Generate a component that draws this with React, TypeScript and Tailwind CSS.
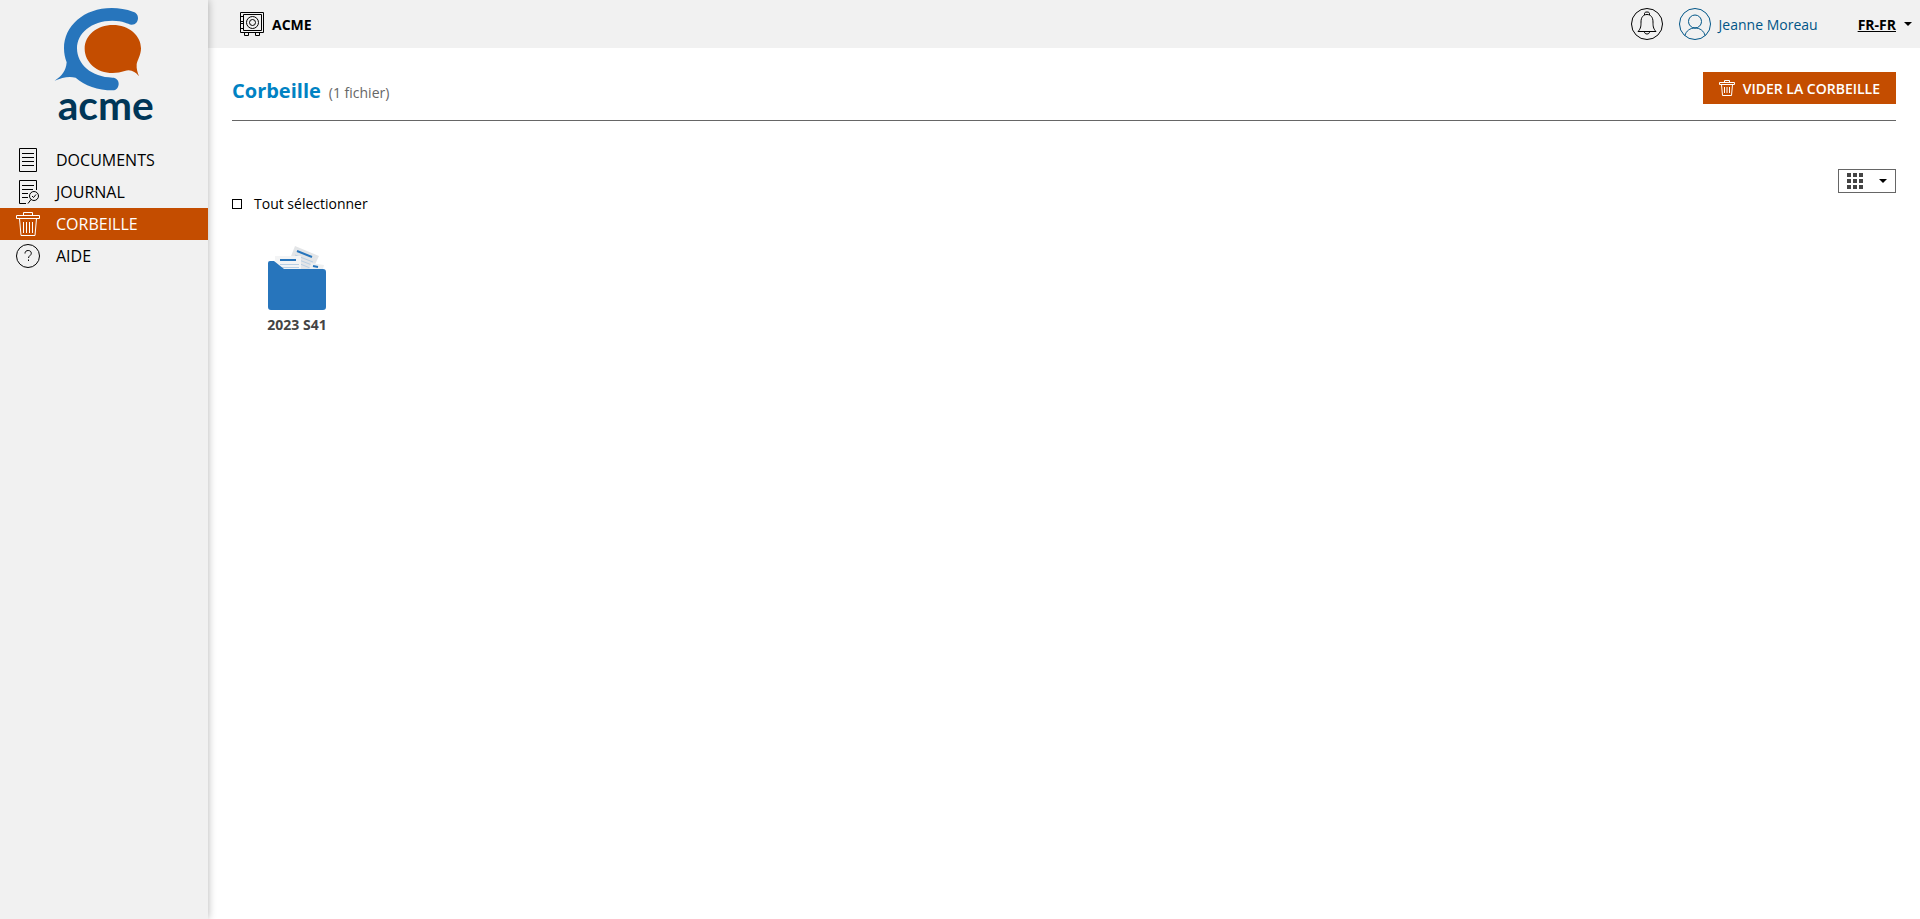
import { useState, type ReactNode } from "react";

type NavId = "documents" | "journal" | "trash" | "help";

const NAV: { id: NavId; label: string; icon: ReactNode }[] = [
  { id: "documents", label: "DOCUMENTS", icon: <DocumentIcon /> },
  { id: "journal", label: "JOURNAL", icon: <JournalIcon /> },
  { id: "trash", label: "CORBEILLE", icon: <TrashIcon /> },
  { id: "help", label: "AIDE", icon: <HelpIcon /> },
];

const FOLDERS = [{ id: "2023-s41", name: "2023 S41" }];

export default function App() {
  return (
    <div className="flex min-h-screen bg-white font-['Open_Sans',sans-serif] text-sm leading-[21px] text-black">
      <Sidebar active="trash" />
      <div className="flex min-w-0 flex-1 flex-col">
        <TopBar />
        <TrashPage />
      </div>
    </div>
  );
}

function Sidebar({ active }: { active: NavId }) {
  return (
    <aside className="z-10 w-52 shrink-0 bg-[#f1f1f1] shadow-[0_0_8px_rgba(0,0,0,0.3)]">
      <a href="#" aria-label="acme" className="flex h-36 flex-col items-center pt-2">
        <Logo />
      </a>
      <nav>
        {NAV.map((item) => (
          <a
            key={item.id}
            href={`#${item.id}`}
            aria-current={item.id === active ? "page" : undefined}
            className={`flex h-8 items-center gap-4 px-4 text-base ${
              item.id === active ? "bg-[#c44d00] text-white" : "text-black"
            }`}
          >
            {item.icon}
            {item.label}
          </a>
        ))}
      </nav>
    </aside>
  );
}

function TopBar() {
  return (
    <header className="flex h-12 items-center bg-[#f1f1f1] pr-2 pl-8">
      <a href="#" className="flex items-center gap-2 font-bold">
        <SafeIcon />
        ACME
      </a>
      <div className="ml-auto flex items-center">
        <button type="button" aria-label="Notifications" className="mr-4">
          <BellIcon />
        </button>
        <a href="#" className="mr-10 flex items-center gap-2 text-[#005587]">
          <UserIcon />
          Jeanne Moreau
        </a>
        <button type="button" className="flex items-center gap-2 font-bold">
          <span className="underline">FR-FR</span>
          <Caret />
        </button>
      </div>
    </header>
  );
}

function TrashPage() {
  const [allSelected, setAllSelected] = useState(false);

  return (
    <main className="flex-1 p-6">
      <div className="flex items-start justify-between border-b border-[#666] pb-[14px]">
        <h1 className="flex items-baseline gap-2 pt-1 text-xl leading-[30px] font-bold text-[#0082c3]">
          Corbeille
          <span className="text-sm font-normal text-[#666]">(1 fichier)</span>
        </h1>
        <button
          type="button"
          className="flex h-8 items-center gap-2 bg-[#c44d00] px-4 font-semibold text-white"
        >
          <SmallTrashIcon />
          VIDER LA CORBEILLE
        </button>
      </div>

      <div className="mt-12 flex justify-end">
        <button
          type="button"
          aria-label="Affichage en grille"
          className="flex h-6 items-center gap-4 border border-[#666] px-2"
        >
          <GridIcon />
          <Caret />
        </button>
      </div>

      <label className="flex w-fit items-center gap-3">
        <input
          type="checkbox"
          checked={allSelected}
          onChange={(e) => setAllSelected(e.target.checked)}
          className="size-[10px] appearance-none border border-black checked:bg-black"
        />
        Tout sélectionner
      </label>

      <ul className="mt-8 flex flex-wrap gap-4">
        {FOLDERS.map((f) => (
          <li key={f.id}>
            <button type="button" className="flex w-[130px] flex-col items-center gap-1 font-bold text-[#444]">
              <FolderIcon />
              {f.name}
            </button>
          </li>
        ))}
      </ul>
    </main>
  );
}

function Logo() {
  return (
    <svg width="100" height="132" viewBox="43 24 300 396" aria-hidden>
      <path
        d="M276 74c12 0 19-9 19-20 0-10-6-17-15-19-20-7-42-11-64-11C133 24 73 78 73 145c0 15 3 29 8 42-2 25-14 41-36 55 22-9 41-14 63-9 26 24 67 38 111 38 11 0 18-9 18-20s-8-18-18-18c-64-1-107-40-107-88 0-45 43-83 106-83 33 0 45 10 58 12Z"
        fill="#2775bc"
      />
      <path
        d="M220 75c47 0 84 31 84 70 0 20-11 36-13 48-1 13 2 24 7 36-11-14-25-22-43-16-11 3-23 6-36 6-48 0-84-33-84-73s37-71 85-71Z"
        fill="#c44d00"
      />
      <text
        x="54"
        y="359"
        fontSize="122"
        fontWeight="700"
        fill="#003657"
        className="font-['Lato',sans-serif]"
      >
        acme
      </text>
    </svg>
  );
}

function DocumentIcon() {
  return (
    <svg width="24" height="24" viewBox="0 0 24 24" fill="none" stroke="currentColor" aria-hidden>
      <path d="M3.5.5h17v23h-17zM6 5.5h12M6 9.5h12M6 13.5h12M6 17.5h12" />
    </svg>
  );
}

function JournalIcon() {
  return (
    <svg width="24" height="24" viewBox="0 0 24 24" fill="none" stroke="currentColor" aria-hidden>
      <path d="M10 23.5H3.5V.5h17V10M6 5.5h12M6 9.5h11M6 13.5h6M6 17.5h6" />
      <circle cx="18" cy="16" r="4.5" />
      <path d="m15 19.5-3 4M16 16l1.5 1.5 2.5-3" />
    </svg>
  );
}

function TrashIcon() {
  return (
    <svg width="24" height="24" viewBox="0 0 24 24" fill="none" stroke="currentColor" aria-hidden>
      <path d="M.5 3.5h23v3H.5zM7.5 3.5v-3h9v3M3.5 6.5l1.5 17h14l1.5-17M7.5 10v11M10.5 10v11M13.5 10v11M16.5 10v11" />
    </svg>
  );
}

function SmallTrashIcon() {
  return (
    <svg width="16" height="16" viewBox="0 0 16 16" fill="none" stroke="currentColor" aria-hidden>
      <path d="M.5 2.5h15v2H.5zM5.5 2.5v-2h5v2M2.5 4.5l1 11h9l1-11M5.5 7v6M8 7v6M10.5 7v6" />
    </svg>
  );
}

function HelpIcon() {
  return (
    <svg width="24" height="24" viewBox="0 0 24 24" fill="none" stroke="currentColor" aria-hidden>
      <circle cx="12" cy="12" r="11.5" />
      <path d="M9 9.5c0-2 1.3-3 3.2-3 1.8 0 3.1 1.1 3.1 2.8 0 2.2-2.8 2.5-2.8 4.7M12.5 15.5V17" />
    </svg>
  );
}

function SafeIcon() {
  return (
    <svg width="24" height="24" viewBox="0 0 24 24" fill="none" stroke="currentColor" aria-hidden>
      <path d="M.5.5h23v20H.5zM3.5 2.5h18v16h-18z" />
      <path d="M.5 4.5h3v5h-3zM.5 11.5h3v5h-3zM4.5 20.5h4v3h-4zM15.5 20.5h4v3h-4z" />
      <circle cx="12.5" cy="10.5" r="6" />
      <circle cx="12.5" cy="10.5" r="3" />
    </svg>
  );
}

function BellIcon() {
  return (
    <svg width="32" height="32" viewBox="0 0 32 32" fill="none" stroke="currentColor" aria-hidden>
      <circle cx="16" cy="16" r="15.5" />
      <path d="M7 23.5c3-3 3-6 3-9.500 0-5 2.5-7.500 6-7.500s6 2.500 6 7.500c0 3.500 0 6.500 3 9.500Z" />
      <path d="M13.5 7V5.500c0-1 1-1.500 2.500-1.500s2.500.5 2.500 1.500V7M13.500 24c0 1.200 1 2 2.500 2s2.500-.8 2.500-2" />
    </svg>
  );
}

function UserIcon() {
  return (
    <svg width="32" height="32" viewBox="0 0 32 32" fill="none" stroke="currentColor" aria-hidden>
      <circle cx="16" cy="16" r="15.5" />
      <circle cx="16" cy="13.5" r="6.5" />
      <path d="M6 27.5c1-4.500 5-7.500 10-7.500s9 3 10 7.500" />
    </svg>
  );
}

function GridIcon() {
  return (
    <svg width="16" height="16" viewBox="0 0 16 16" fill="#444" aria-hidden>
      <path d="M0 0h4v4H0zM6 0h4v4H6zM12 0h4v4h-4zM0 6h4v4H0zM6 6h4v4H6zM12 6h4v4h-4zM0 12h4v4H0zM6 12h4v4H6zM12 12h4v4h-4z" />
    </svg>
  );
}

function Caret() {
  return (
    <svg width="8" height="4" viewBox="0 0 8 4" fill="currentColor" aria-hidden>
      <path d="M0 0h8L4 4z" />
    </svg>
  );
}

function FolderIcon() {
  return (
    <svg width="58" height="64" viewBox="0 0 58 64" aria-hidden>
      <path d="m27 0 24 10-8 17-23-9z" fill="#e3e5e7" />
      <path d="m29 5 15 6" stroke="#2775bc" strokeWidth="2" />
      <path d="m27 9 18 7M26 12l18 7M25 15l17 7" stroke="#b9cfe4" />
      <path d="m43 17 13 2-2 8H40z" fill="#eef0f1" />
      <path d="m45 20 5 1" stroke="#2775bc" strokeWidth="2" />
      <path d="M7 10h26v14H7z" fill="#f3f4f5" />
      <path d="M12 14h16" stroke="#2775bc" strokeWidth="2" />
      <path d="M12 18.5h19M12 21.5h19" stroke="#b9cfe4" />
      <path d="M0 17q0-2 2-2h4l10 8h39q3 0 3 3v35q0 3-3 3H3q-3 0-3-3z" fill="#2775bc" />
    </svg>
  );
}
